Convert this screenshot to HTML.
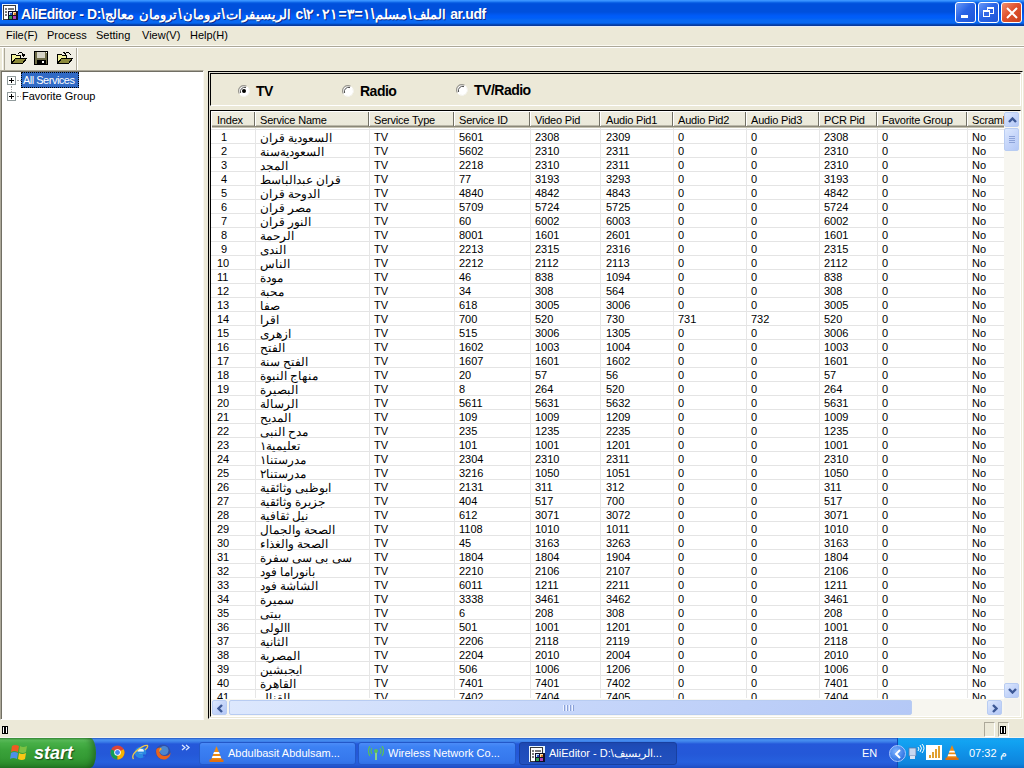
<!DOCTYPE html><html><head><meta charset="utf-8"><title>AliEditor</title><style>
*{box-sizing:border-box}
html,body{margin:0;padding:0}
body{width:1024px;height:768px;overflow:hidden;position:relative;background:#ECE9D8;font-family:"Liberation Sans",sans-serif;font-size:11px;color:#000}
.a{position:absolute}
.t{position:absolute;white-space:nowrap;line-height:13px}
#title{left:0;top:0;width:1024px;height:26px;background:linear-gradient(to bottom,#3E98FF 0px,#3590FF 1px,#1670EE 2px,#0458E0 3px,#0050DC 4px,#0050DC 12px,#0056EC 14px,#005CF8 16px,#005EF8 18px,#0868F2 20px,#0868F2 23px,#0052D0 24px,#083A9C 25px,#083A9C 26px)}
#title .tt{left:21px;top:6px;font-weight:bold;font-size:14px;letter-spacing:-0.4px;color:#fff;line-height:16px;text-shadow:1px 1px 0 #0A2A8A}
.tb{position:absolute;top:2px;width:21px;height:21px;border:1px solid #fff;border-radius:3px;background:linear-gradient(135deg,#6A9AF8 0%,#2A64E6 45%,#1E55D8 100%)}
.tb.cl{background:linear-gradient(135deg,#F19070 0%,#E0522E 45%,#C8401C 100%)}
#menu .t{top:29px}
.hsep1{left:0;top:46px;width:1024px;height:1px;background:#ACA899}
.hsep2{left:0;top:47px;width:1024px;height:1px;background:#FFFFFF}
#tree{left:0;top:70px;width:204px;height:650px;background:#fff;border-top:1px solid #ACA899;border-left:1px solid #ACA899;border-right:1px solid #F8F7F2;border-bottom:1px solid #fff;box-shadow:inset 1px 1px 0 #716F64}
#panel{left:208px;top:71px;width:815px;height:648px;border-top:1px solid #000;border-left:1px solid #000;border-right:1px solid #fff;border-bottom:1px solid #fff;background:#ECE9D8}
#panel2{left:209px;top:72px;width:813px;height:646px;border-top:1px solid #E0DED4;border-left:1px solid #E0DED4}
#rg{left:210px;top:73px;width:811px;height:33px;border-top:1px solid #000;border-left:1px solid #000;border-right:1px solid #fff;border-bottom:1px solid #fff}
#lv{left:210px;top:110px;width:811px;height:607px;background:#fff;border-top:1px solid #000;border-left:1px solid #000;border-right:1px solid #fff;border-bottom:1px solid #fff}
.hdr{left:211px;top:111px;width:793px;height:17px;border-top:1px solid #fff;border-left:1px solid #fff;background:linear-gradient(to bottom,#EDEBDE 0,#EBE9DA 13px,#8A8778 14px,#8A8778 15px,#C5C2B2 15px,#C5C2B2 16px)}
.c.hd{letter-spacing:-0.2px}
.hs{position:absolute;top:112px;width:1px;height:14px;background:#716F64}
.hs2{position:absolute;top:111px;width:1px;height:15px;background:#fff}
.gh{position:absolute;left:211px;width:793px;height:1px;background:#E4E4E4}
.gv{position:absolute;top:128px;width:1px;height:570px;background:#E6E6E6}
.c{position:absolute;white-space:nowrap;line-height:13px}
.c.ar{font-size:11.5px;margin-top:1px}
.rb{position:absolute;width:12px;height:12px;border-radius:50%;background:radial-gradient(circle at 60% 60%,#fff 0,#fff 40%,#E8E6DC 75%,#C8C4B4 100%);border:1px solid #D0CDC0}
.rl{position:absolute;font-weight:bold;font-size:14px;letter-spacing:-0.5px;line-height:16px;white-space:nowrap}
#vs{left:1004px;top:111px;width:16px;height:588px;background:#F7F6F0}
#hs{left:211px;top:699px;width:793px;height:17px;background:#F7F6F0}
.sbb{position:absolute;border:1px solid #B8CCF2;border-radius:2px;background:linear-gradient(135deg,#DDE8FD 0%,#C6D6FA 50%,#B4C8F6 100%)}
#status{left:0;top:718px;width:1024px;height:20px;background:#ECE9D8}
#task{left:0;top:738px;width:1024px;height:30px;background:linear-gradient(to bottom,#2050B8 0,#3C7EE6 1px,#4890F0 2px,#3A7CE8 4px,#2558DA 6px,#2458D8 16px,#2660DE 24px,#2458D4 27px,#1E4CC0 30px)}
#start{left:0;top:738px;width:96px;height:30px;border-radius:0 6px 6px 0/0 15px 15px 0;background:linear-gradient(to bottom,#3A8E3A 0,#5CBF5C 2px,#48B048 5px,#3AA23A 12px,#349A34 20px,#2C8C2C 26px,#237823 30px);box-shadow:inset -5px 0 6px -2px rgba(20,70,20,0.55)}
.task{position:absolute;top:742px;height:23px;border-radius:3px;background:linear-gradient(to bottom,#4C8CF8 0,#3C81F3 4px,#3577EC 18px,#2E6BE0 23px);border:1px solid #2358C8}
.task.act{background:linear-gradient(to bottom,#1E48B0 0,#1E4CB8 4px,#2150BE 18px,#2454C2 23px);border-color:#1840A0}
.task .t{color:#fff;top:4px}
#tray{left:897px;top:738px;width:127px;height:30px;background:linear-gradient(to bottom,#1C9CEE 0,#12A4F2 3px,#0F92E8 15px,#0E84DC 26px,#0B6CC8 30px);border-left:1px solid #0F4AB4}
</style></head><body>
<div id="title" class="a">
<svg class="a" style="left:2px;top:4px" width="16" height="16" viewBox="0 0 16 16" shape-rendering="crispEdges"><rect x="0" y="0" width="16" height="16" fill="#EAF6FF"/><rect x="1.5" y="1.5" width="12" height="14" fill="#fff" stroke="#3A3A3A"/><rect x="3" y="4" width="2" height="2" fill="#7A7A7A"/><rect x="3" y="7" width="2" height="2" fill="#7A7A7A"/><rect x="3" y="10" width="2" height="2" fill="#7A7A7A"/><rect x="6" y="4" width="6" height="2" fill="#7A7A7A"/><rect x="6" y="7" width="10" height="9" fill="#10102A"/><rect x="7" y="8" width="3" height="3" fill="#2A58C8"/><rect x="7" y="8" width="3" height="1" fill="#CDE6FF"/><rect x="7" y="8" width="1" height="3" fill="#CDE6FF"/><rect x="11" y="8" width="3" height="3" fill="#D87A20"/><rect x="11" y="8" width="3" height="1" fill="#FFDDA8"/><rect x="11" y="8" width="1" height="3" fill="#FFDDA8"/><rect x="7" y="12" width="3" height="3" fill="#30A050"/><rect x="11" y="12" width="3" height="3" fill="#B040B8"/></svg>
<div class="t tt">AliEditor - D:\<span dir="rtl" style="unicode-bidi:isolate;font-size:13.4px;letter-spacing:0;margin:0 0.7px">معالج</span> <span dir="rtl" style="unicode-bidi:isolate;font-size:13.4px;letter-spacing:0;margin:0 0.7px">ترومان</span>\<span dir="rtl" style="unicode-bidi:isolate;font-size:13.4px;letter-spacing:0;margin:0 0.7px">ترومان</span>\<span dir="rtl" style="unicode-bidi:isolate;font-size:13.4px;letter-spacing:0;margin:0 0.7px">الريسيفرات</span> <span style="unicode-bidi:bidi-override;direction:ltr">c\٢٠٢١=٣=١\</span><span dir="rtl" style="unicode-bidi:isolate;font-size:13.4px;letter-spacing:0;margin:0 0.7px">مسلم</span>\<span dir="rtl" style="unicode-bidi:isolate;font-size:13.4px;letter-spacing:0;margin:0 0.7px">الملف</span> ar.udf</div>
<div class="tb" style="left:955px"><div class="a" style="left:5px;top:12px;width:7px;height:3px;background:#fff"></div></div>
<div class="tb" style="left:978px"><div class="a" style="left:8px;top:4px;width:7px;height:7px;border:1px solid #fff;border-top-width:2px"></div><div class="a" style="left:4px;top:7px;width:7px;height:7px;border:1px solid #fff;border-top-width:2px;background:#3468E6"></div></div>
<div class="tb cl" style="left:1001px"><svg class="a" style="left:4px;top:4px" width="12" height="12" viewBox="0 0 12 12"><path d="M1 1L11 11M11 1L1 11" stroke="#fff" stroke-width="2"/></svg></div>
</div>
<div class="a" style="left:0;top:26px;width:1024px;height:1px;background:#E4ECF8"></div>
<div id="menu">
<div class="t" style="left:6px">File(F)</div>
<div class="t" style="left:47px">Process</div>
<div class="t" style="left:96px">Setting</div>
<div class="t" style="left:142px">View(V)</div>
<div class="t" style="left:190px">Help(H)</div>
</div>
<div class="a" style="left:0;top:45px;width:1024px;height:1px;background:#FBFAF2"></div><div class="a hsep1"></div><div class="a hsep2"></div>
<div class="a" style="left:2px;top:48px;width:1px;height:22px;background:#fff"></div>
<div class="a" style="left:4px;top:48px;width:1px;height:22px;background:#ACA899"></div>
<div class="a" style="left:5px;top:48px;width:71px;height:22px;background:#F0EEE4"></div>
<div class="a" style="left:76px;top:48px;width:1px;height:22px;background:#ACA899"></div>
<div class="a" style="left:77px;top:48px;width:1px;height:22px;background:#fff"></div>
<svg class="a" style="left:11px;top:51px" width="16" height="14" viewBox="0 0 16 14" shape-rendering="crispEdges"><path d="M0.5 12.5V3.5h4l1 1h4v3" fill="#F2F29A" stroke="#000"/><path d="M0.5 12.5V5" stroke="#000"/><path d="M0.5 12.5L4.5 7.5H15.5L11.5 12.5Z" fill="#8C8A3C" stroke="#000"/><path d="M8 1h3M7 2h1M11 2h1M12 3h1" stroke="#000"/><path d="M11 3h3v2h-1v1h-1z" fill="#000"/></svg>
<svg class="a" style="left:34px;top:51px" width="14" height="14" viewBox="0 0 14 14" shape-rendering="crispEdges"><rect x="0.5" y="0.5" width="13" height="13" fill="#6E6C48" stroke="#000"/><rect x="3" y="1" width="8" height="6" fill="#D6D4C8"/><rect x="3" y="9" width="9" height="4" fill="#000"/><rect x="8" y="10" width="2" height="2" fill="#fff"/><rect x="12" y="1" width="1" height="1" fill="#fff"/></svg>
<svg class="a" style="left:57px;top:51px" width="16" height="14" viewBox="0 0 16 14" shape-rendering="crispEdges"><path d="M0.5 12.5V3.5h4l1 1h4v3" fill="#F2F29A" stroke="#000"/><path d="M0.5 12.5V5" stroke="#000"/><path d="M0.5 12.5L4.5 7.5H15.5L11.5 12.5Z" fill="#8C8A3C" stroke="#000"/><path d="M9 1h3M8 2h1M12 2h1M13 3h1" stroke="#000"/><path d="M6 1h2v1h1v2h-1v-1h-1v-1h-1z" fill="#000"/></svg>
<div id="tree" class="a"></div>
<div class="a" style="left:21px;top:72px;width:58px;height:16px;background:#316AC5;outline:1px dotted #000;outline-offset:-1px"></div>
<div class="t" style="left:23px;top:74px;color:#fff;letter-spacing:-0.5px">All Services</div>
<div class="t" style="left:22px;top:90px">Favorite Group</div>
<div class="a" style="left:7px;top:76px;width:9px;height:9px;border:1px solid #919B9C;background:#fff"><div class="a" style="left:1px;top:3px;width:5px;height:1px;background:#000"></div><div class="a" style="left:3px;top:1px;width:1px;height:5px;background:#000"></div></div>
<div class="a" style="left:17px;top:80px;width:4px;height:1px;border-top:1px dotted #A0A0A0"></div>
<div class="a" style="left:7px;top:92px;width:9px;height:9px;border:1px solid #919B9C;background:#fff"><div class="a" style="left:1px;top:3px;width:5px;height:1px;background:#000"></div><div class="a" style="left:3px;top:1px;width:1px;height:5px;background:#000"></div></div>
<div class="a" style="left:17px;top:96px;width:4px;height:1px;border-top:1px dotted #A0A0A0"></div>
<div class="a" style="left:11px;top:86px;width:1px;height:6px;border-left:1px dotted #A0A0A0"></div>
<div id="panel" class="a"></div><div id="panel2" class="a"></div><div id="rg" class="a"></div>
<svg class="a" style="left:238px;top:85px" width="12" height="12" viewBox="0 0 12 12"><circle cx="6" cy="6" r="5.5" fill="#fff"/><path d="M1.3 8.5A5.3 5.3 0 0 1 8.5 1.3" fill="none" stroke="#9A9890" stroke-width="1.2"/><path d="M2.6 8A4.2 4.2 0 0 1 8 2.6" fill="none" stroke="#505050" stroke-width="1"/><path d="M3.5 10.7A5.3 5.3 0 0 0 10.7 3.5" fill="none" stroke="#F4F3EE" stroke-width="1"/><circle cx="6" cy="6" r="2" fill="#000"/></svg>
<div class="rl" style="left:256px;top:83px">TV</div>
<svg class="a" style="left:342px;top:85px" width="12" height="12" viewBox="0 0 12 12"><circle cx="6" cy="6" r="5.5" fill="#fff"/><path d="M1.3 8.5A5.3 5.3 0 0 1 8.5 1.3" fill="none" stroke="#9A9890" stroke-width="1.2"/><path d="M2.6 8A4.2 4.2 0 0 1 8 2.6" fill="none" stroke="#505050" stroke-width="1"/><path d="M3.5 10.7A5.3 5.3 0 0 0 10.7 3.5" fill="none" stroke="#F4F3EE" stroke-width="1"/></svg>
<div class="rl" style="left:360px;top:83px">Radio</div>
<svg class="a" style="left:456px;top:84px" width="12" height="12" viewBox="0 0 12 12"><circle cx="6" cy="6" r="5.5" fill="#fff"/><path d="M1.3 8.5A5.3 5.3 0 0 1 8.5 1.3" fill="none" stroke="#9A9890" stroke-width="1.2"/><path d="M2.6 8A4.2 4.2 0 0 1 8 2.6" fill="none" stroke="#505050" stroke-width="1"/><path d="M3.5 10.7A5.3 5.3 0 0 0 10.7 3.5" fill="none" stroke="#F4F3EE" stroke-width="1"/></svg>
<div class="rl" style="left:474px;top:82px">TV/Radio</div>
<div id="lv" class="a"></div>
<div class="a hdr"></div>
<div class="hs" style="left:254px"></div><div class="hs2" style="left:255px"></div>
<div class="hs" style="left:368px"></div><div class="hs2" style="left:369px"></div>
<div class="hs" style="left:453px"></div><div class="hs2" style="left:454px"></div>
<div class="hs" style="left:529px"></div><div class="hs2" style="left:530px"></div>
<div class="hs" style="left:599px"></div><div class="hs2" style="left:600px"></div>
<div class="hs" style="left:672px"></div><div class="hs2" style="left:673px"></div>
<div class="hs" style="left:745px"></div><div class="hs2" style="left:746px"></div>
<div class="hs" style="left:818px"></div><div class="hs2" style="left:819px"></div>
<div class="hs" style="left:876px"></div><div class="hs2" style="left:877px"></div>
<div class="hs" style="left:966px"></div><div class="hs2" style="left:967px"></div>
<div class="c hd" style="left:217px;top:114px">Index</div>
<div class="c hd" style="left:260px;top:114px">Service Name</div>
<div class="c hd" style="left:374px;top:114px">Service Type</div>
<div class="c hd" style="left:459px;top:114px">Service ID</div>
<div class="c hd" style="left:535px;top:114px">Video Pid</div>
<div class="c hd" style="left:606px;top:114px">Audio Pid1</div>
<div class="c hd" style="left:678px;top:114px">Audio Pid2</div>
<div class="c hd" style="left:751px;top:114px">Audio Pid3</div>
<div class="c hd" style="left:824px;top:114px">PCR Pid</div>
<div class="c hd" style="left:882px;top:114px">Favorite Group</div>
<div class="c hd" style="left:972px;top:114px">Scrambl</div>
<div class="gh" style="top:129px"></div>
<div class="gh" style="top:143px"></div>
<div class="gh" style="top:157px"></div>
<div class="gh" style="top:171px"></div>
<div class="gh" style="top:185px"></div>
<div class="gh" style="top:199px"></div>
<div class="gh" style="top:213px"></div>
<div class="gh" style="top:227px"></div>
<div class="gh" style="top:241px"></div>
<div class="gh" style="top:255px"></div>
<div class="gh" style="top:269px"></div>
<div class="gh" style="top:283px"></div>
<div class="gh" style="top:297px"></div>
<div class="gh" style="top:311px"></div>
<div class="gh" style="top:325px"></div>
<div class="gh" style="top:339px"></div>
<div class="gh" style="top:353px"></div>
<div class="gh" style="top:367px"></div>
<div class="gh" style="top:381px"></div>
<div class="gh" style="top:395px"></div>
<div class="gh" style="top:409px"></div>
<div class="gh" style="top:423px"></div>
<div class="gh" style="top:437px"></div>
<div class="gh" style="top:451px"></div>
<div class="gh" style="top:465px"></div>
<div class="gh" style="top:479px"></div>
<div class="gh" style="top:493px"></div>
<div class="gh" style="top:507px"></div>
<div class="gh" style="top:521px"></div>
<div class="gh" style="top:535px"></div>
<div class="gh" style="top:549px"></div>
<div class="gh" style="top:563px"></div>
<div class="gh" style="top:577px"></div>
<div class="gh" style="top:591px"></div>
<div class="gh" style="top:605px"></div>
<div class="gh" style="top:619px"></div>
<div class="gh" style="top:633px"></div>
<div class="gh" style="top:647px"></div>
<div class="gh" style="top:661px"></div>
<div class="gh" style="top:675px"></div>
<div class="gh" style="top:689px"></div>
<div class="gv" style="left:255px"></div>
<div class="gv" style="left:369px"></div>
<div class="gv" style="left:454px"></div>
<div class="gv" style="left:530px"></div>
<div class="gv" style="left:600px"></div>
<div class="gv" style="left:673px"></div>
<div class="gv" style="left:746px"></div>
<div class="gv" style="left:819px"></div>
<div class="gv" style="left:877px"></div>
<div class="gv" style="left:967px"></div>
<div class="c" style="left:221px;top:131px">1</div>
<div class="c ar" style="left:260px;top:131px" dir="rtl">السعودية قران</div>
<div class="c" style="left:374px;top:131px">TV</div>
<div class="c" style="left:459px;top:131px">5601</div>
<div class="c" style="left:535px;top:131px">2308</div>
<div class="c" style="left:606px;top:131px">2309</div>
<div class="c" style="left:678px;top:131px">0</div>
<div class="c" style="left:751px;top:131px">0</div>
<div class="c" style="left:824px;top:131px">2308</div>
<div class="c" style="left:882px;top:131px">0</div>
<div class="c" style="left:972px;top:131px">No</div>
<div class="c" style="left:221px;top:145px">2</div>
<div class="c ar" style="left:260px;top:145px" dir="rtl">السعوديةسنة</div>
<div class="c" style="left:374px;top:145px">TV</div>
<div class="c" style="left:459px;top:145px">5602</div>
<div class="c" style="left:535px;top:145px">2310</div>
<div class="c" style="left:606px;top:145px">2311</div>
<div class="c" style="left:678px;top:145px">0</div>
<div class="c" style="left:751px;top:145px">0</div>
<div class="c" style="left:824px;top:145px">2310</div>
<div class="c" style="left:882px;top:145px">0</div>
<div class="c" style="left:972px;top:145px">No</div>
<div class="c" style="left:221px;top:159px">3</div>
<div class="c ar" style="left:260px;top:159px" dir="rtl">المجد</div>
<div class="c" style="left:374px;top:159px">TV</div>
<div class="c" style="left:459px;top:159px">2218</div>
<div class="c" style="left:535px;top:159px">2310</div>
<div class="c" style="left:606px;top:159px">2311</div>
<div class="c" style="left:678px;top:159px">0</div>
<div class="c" style="left:751px;top:159px">0</div>
<div class="c" style="left:824px;top:159px">2310</div>
<div class="c" style="left:882px;top:159px">0</div>
<div class="c" style="left:972px;top:159px">No</div>
<div class="c" style="left:221px;top:173px">4</div>
<div class="c ar" style="left:260px;top:173px" dir="rtl">قران عبدالباسط</div>
<div class="c" style="left:374px;top:173px">TV</div>
<div class="c" style="left:459px;top:173px">77</div>
<div class="c" style="left:535px;top:173px">3193</div>
<div class="c" style="left:606px;top:173px">3293</div>
<div class="c" style="left:678px;top:173px">0</div>
<div class="c" style="left:751px;top:173px">0</div>
<div class="c" style="left:824px;top:173px">3193</div>
<div class="c" style="left:882px;top:173px">0</div>
<div class="c" style="left:972px;top:173px">No</div>
<div class="c" style="left:221px;top:187px">5</div>
<div class="c ar" style="left:260px;top:187px" dir="rtl">الدوحة قران</div>
<div class="c" style="left:374px;top:187px">TV</div>
<div class="c" style="left:459px;top:187px">4840</div>
<div class="c" style="left:535px;top:187px">4842</div>
<div class="c" style="left:606px;top:187px">4843</div>
<div class="c" style="left:678px;top:187px">0</div>
<div class="c" style="left:751px;top:187px">0</div>
<div class="c" style="left:824px;top:187px">4842</div>
<div class="c" style="left:882px;top:187px">0</div>
<div class="c" style="left:972px;top:187px">No</div>
<div class="c" style="left:221px;top:201px">6</div>
<div class="c ar" style="left:260px;top:201px" dir="rtl">مصر قران</div>
<div class="c" style="left:374px;top:201px">TV</div>
<div class="c" style="left:459px;top:201px">5709</div>
<div class="c" style="left:535px;top:201px">5724</div>
<div class="c" style="left:606px;top:201px">5725</div>
<div class="c" style="left:678px;top:201px">0</div>
<div class="c" style="left:751px;top:201px">0</div>
<div class="c" style="left:824px;top:201px">5724</div>
<div class="c" style="left:882px;top:201px">0</div>
<div class="c" style="left:972px;top:201px">No</div>
<div class="c" style="left:221px;top:215px">7</div>
<div class="c ar" style="left:260px;top:215px" dir="rtl">النور قران</div>
<div class="c" style="left:374px;top:215px">TV</div>
<div class="c" style="left:459px;top:215px">60</div>
<div class="c" style="left:535px;top:215px">6002</div>
<div class="c" style="left:606px;top:215px">6003</div>
<div class="c" style="left:678px;top:215px">0</div>
<div class="c" style="left:751px;top:215px">0</div>
<div class="c" style="left:824px;top:215px">6002</div>
<div class="c" style="left:882px;top:215px">0</div>
<div class="c" style="left:972px;top:215px">No</div>
<div class="c" style="left:221px;top:229px">8</div>
<div class="c ar" style="left:260px;top:229px" dir="rtl">الرحمة</div>
<div class="c" style="left:374px;top:229px">TV</div>
<div class="c" style="left:459px;top:229px">8001</div>
<div class="c" style="left:535px;top:229px">1601</div>
<div class="c" style="left:606px;top:229px">2601</div>
<div class="c" style="left:678px;top:229px">0</div>
<div class="c" style="left:751px;top:229px">0</div>
<div class="c" style="left:824px;top:229px">1601</div>
<div class="c" style="left:882px;top:229px">0</div>
<div class="c" style="left:972px;top:229px">No</div>
<div class="c" style="left:221px;top:243px">9</div>
<div class="c ar" style="left:260px;top:243px" dir="rtl">الندى</div>
<div class="c" style="left:374px;top:243px">TV</div>
<div class="c" style="left:459px;top:243px">2213</div>
<div class="c" style="left:535px;top:243px">2315</div>
<div class="c" style="left:606px;top:243px">2316</div>
<div class="c" style="left:678px;top:243px">0</div>
<div class="c" style="left:751px;top:243px">0</div>
<div class="c" style="left:824px;top:243px">2315</div>
<div class="c" style="left:882px;top:243px">0</div>
<div class="c" style="left:972px;top:243px">No</div>
<div class="c" style="left:217px;top:257px">10</div>
<div class="c ar" style="left:260px;top:257px" dir="rtl">الناس</div>
<div class="c" style="left:374px;top:257px">TV</div>
<div class="c" style="left:459px;top:257px">2212</div>
<div class="c" style="left:535px;top:257px">2112</div>
<div class="c" style="left:606px;top:257px">2113</div>
<div class="c" style="left:678px;top:257px">0</div>
<div class="c" style="left:751px;top:257px">0</div>
<div class="c" style="left:824px;top:257px">2112</div>
<div class="c" style="left:882px;top:257px">0</div>
<div class="c" style="left:972px;top:257px">No</div>
<div class="c" style="left:217px;top:271px">11</div>
<div class="c ar" style="left:260px;top:271px" dir="rtl">مودة</div>
<div class="c" style="left:374px;top:271px">TV</div>
<div class="c" style="left:459px;top:271px">46</div>
<div class="c" style="left:535px;top:271px">838</div>
<div class="c" style="left:606px;top:271px">1094</div>
<div class="c" style="left:678px;top:271px">0</div>
<div class="c" style="left:751px;top:271px">0</div>
<div class="c" style="left:824px;top:271px">838</div>
<div class="c" style="left:882px;top:271px">0</div>
<div class="c" style="left:972px;top:271px">No</div>
<div class="c" style="left:217px;top:285px">12</div>
<div class="c ar" style="left:260px;top:285px" dir="rtl">محبة</div>
<div class="c" style="left:374px;top:285px">TV</div>
<div class="c" style="left:459px;top:285px">34</div>
<div class="c" style="left:535px;top:285px">308</div>
<div class="c" style="left:606px;top:285px">564</div>
<div class="c" style="left:678px;top:285px">0</div>
<div class="c" style="left:751px;top:285px">0</div>
<div class="c" style="left:824px;top:285px">308</div>
<div class="c" style="left:882px;top:285px">0</div>
<div class="c" style="left:972px;top:285px">No</div>
<div class="c" style="left:217px;top:299px">13</div>
<div class="c ar" style="left:260px;top:299px" dir="rtl">صفا</div>
<div class="c" style="left:374px;top:299px">TV</div>
<div class="c" style="left:459px;top:299px">618</div>
<div class="c" style="left:535px;top:299px">3005</div>
<div class="c" style="left:606px;top:299px">3006</div>
<div class="c" style="left:678px;top:299px">0</div>
<div class="c" style="left:751px;top:299px">0</div>
<div class="c" style="left:824px;top:299px">3005</div>
<div class="c" style="left:882px;top:299px">0</div>
<div class="c" style="left:972px;top:299px">No</div>
<div class="c" style="left:217px;top:313px">14</div>
<div class="c ar" style="left:260px;top:313px" dir="rtl">اقرا</div>
<div class="c" style="left:374px;top:313px">TV</div>
<div class="c" style="left:459px;top:313px">700</div>
<div class="c" style="left:535px;top:313px">520</div>
<div class="c" style="left:606px;top:313px">730</div>
<div class="c" style="left:678px;top:313px">731</div>
<div class="c" style="left:751px;top:313px">732</div>
<div class="c" style="left:824px;top:313px">520</div>
<div class="c" style="left:882px;top:313px">0</div>
<div class="c" style="left:972px;top:313px">No</div>
<div class="c" style="left:217px;top:327px">15</div>
<div class="c ar" style="left:260px;top:327px" dir="rtl">ازهرى</div>
<div class="c" style="left:374px;top:327px">TV</div>
<div class="c" style="left:459px;top:327px">515</div>
<div class="c" style="left:535px;top:327px">3006</div>
<div class="c" style="left:606px;top:327px">1305</div>
<div class="c" style="left:678px;top:327px">0</div>
<div class="c" style="left:751px;top:327px">0</div>
<div class="c" style="left:824px;top:327px">3006</div>
<div class="c" style="left:882px;top:327px">0</div>
<div class="c" style="left:972px;top:327px">No</div>
<div class="c" style="left:217px;top:341px">16</div>
<div class="c ar" style="left:260px;top:341px" dir="rtl">الفتح</div>
<div class="c" style="left:374px;top:341px">TV</div>
<div class="c" style="left:459px;top:341px">1602</div>
<div class="c" style="left:535px;top:341px">1003</div>
<div class="c" style="left:606px;top:341px">1004</div>
<div class="c" style="left:678px;top:341px">0</div>
<div class="c" style="left:751px;top:341px">0</div>
<div class="c" style="left:824px;top:341px">1003</div>
<div class="c" style="left:882px;top:341px">0</div>
<div class="c" style="left:972px;top:341px">No</div>
<div class="c" style="left:217px;top:355px">17</div>
<div class="c ar" style="left:260px;top:355px" dir="rtl">الفتح سنة</div>
<div class="c" style="left:374px;top:355px">TV</div>
<div class="c" style="left:459px;top:355px">1607</div>
<div class="c" style="left:535px;top:355px">1601</div>
<div class="c" style="left:606px;top:355px">1602</div>
<div class="c" style="left:678px;top:355px">0</div>
<div class="c" style="left:751px;top:355px">0</div>
<div class="c" style="left:824px;top:355px">1601</div>
<div class="c" style="left:882px;top:355px">0</div>
<div class="c" style="left:972px;top:355px">No</div>
<div class="c" style="left:217px;top:369px">18</div>
<div class="c ar" style="left:260px;top:369px" dir="rtl">منهاج النبوة</div>
<div class="c" style="left:374px;top:369px">TV</div>
<div class="c" style="left:459px;top:369px">20</div>
<div class="c" style="left:535px;top:369px">57</div>
<div class="c" style="left:606px;top:369px">56</div>
<div class="c" style="left:678px;top:369px">0</div>
<div class="c" style="left:751px;top:369px">0</div>
<div class="c" style="left:824px;top:369px">57</div>
<div class="c" style="left:882px;top:369px">0</div>
<div class="c" style="left:972px;top:369px">No</div>
<div class="c" style="left:217px;top:383px">19</div>
<div class="c ar" style="left:260px;top:383px" dir="rtl">البصيرة</div>
<div class="c" style="left:374px;top:383px">TV</div>
<div class="c" style="left:459px;top:383px">8</div>
<div class="c" style="left:535px;top:383px">264</div>
<div class="c" style="left:606px;top:383px">520</div>
<div class="c" style="left:678px;top:383px">0</div>
<div class="c" style="left:751px;top:383px">0</div>
<div class="c" style="left:824px;top:383px">264</div>
<div class="c" style="left:882px;top:383px">0</div>
<div class="c" style="left:972px;top:383px">No</div>
<div class="c" style="left:217px;top:397px">20</div>
<div class="c ar" style="left:260px;top:397px" dir="rtl">الرسالة</div>
<div class="c" style="left:374px;top:397px">TV</div>
<div class="c" style="left:459px;top:397px">5611</div>
<div class="c" style="left:535px;top:397px">5631</div>
<div class="c" style="left:606px;top:397px">5632</div>
<div class="c" style="left:678px;top:397px">0</div>
<div class="c" style="left:751px;top:397px">0</div>
<div class="c" style="left:824px;top:397px">5631</div>
<div class="c" style="left:882px;top:397px">0</div>
<div class="c" style="left:972px;top:397px">No</div>
<div class="c" style="left:217px;top:411px">21</div>
<div class="c ar" style="left:260px;top:411px" dir="rtl">المديح</div>
<div class="c" style="left:374px;top:411px">TV</div>
<div class="c" style="left:459px;top:411px">109</div>
<div class="c" style="left:535px;top:411px">1009</div>
<div class="c" style="left:606px;top:411px">1209</div>
<div class="c" style="left:678px;top:411px">0</div>
<div class="c" style="left:751px;top:411px">0</div>
<div class="c" style="left:824px;top:411px">1009</div>
<div class="c" style="left:882px;top:411px">0</div>
<div class="c" style="left:972px;top:411px">No</div>
<div class="c" style="left:217px;top:425px">22</div>
<div class="c ar" style="left:260px;top:425px" dir="rtl">مدح النبى</div>
<div class="c" style="left:374px;top:425px">TV</div>
<div class="c" style="left:459px;top:425px">235</div>
<div class="c" style="left:535px;top:425px">1235</div>
<div class="c" style="left:606px;top:425px">2235</div>
<div class="c" style="left:678px;top:425px">0</div>
<div class="c" style="left:751px;top:425px">0</div>
<div class="c" style="left:824px;top:425px">1235</div>
<div class="c" style="left:882px;top:425px">0</div>
<div class="c" style="left:972px;top:425px">No</div>
<div class="c" style="left:217px;top:439px">23</div>
<div class="c ar" style="left:260px;top:439px" dir="rtl">تعليمية١</div>
<div class="c" style="left:374px;top:439px">TV</div>
<div class="c" style="left:459px;top:439px">101</div>
<div class="c" style="left:535px;top:439px">1001</div>
<div class="c" style="left:606px;top:439px">1201</div>
<div class="c" style="left:678px;top:439px">0</div>
<div class="c" style="left:751px;top:439px">0</div>
<div class="c" style="left:824px;top:439px">1001</div>
<div class="c" style="left:882px;top:439px">0</div>
<div class="c" style="left:972px;top:439px">No</div>
<div class="c" style="left:217px;top:453px">24</div>
<div class="c ar" style="left:260px;top:453px" dir="rtl">مدرستنا١</div>
<div class="c" style="left:374px;top:453px">TV</div>
<div class="c" style="left:459px;top:453px">2304</div>
<div class="c" style="left:535px;top:453px">2310</div>
<div class="c" style="left:606px;top:453px">2311</div>
<div class="c" style="left:678px;top:453px">0</div>
<div class="c" style="left:751px;top:453px">0</div>
<div class="c" style="left:824px;top:453px">2310</div>
<div class="c" style="left:882px;top:453px">0</div>
<div class="c" style="left:972px;top:453px">No</div>
<div class="c" style="left:217px;top:467px">25</div>
<div class="c ar" style="left:260px;top:467px" dir="rtl">مدرستنا٢</div>
<div class="c" style="left:374px;top:467px">TV</div>
<div class="c" style="left:459px;top:467px">3216</div>
<div class="c" style="left:535px;top:467px">1050</div>
<div class="c" style="left:606px;top:467px">1051</div>
<div class="c" style="left:678px;top:467px">0</div>
<div class="c" style="left:751px;top:467px">0</div>
<div class="c" style="left:824px;top:467px">1050</div>
<div class="c" style="left:882px;top:467px">0</div>
<div class="c" style="left:972px;top:467px">No</div>
<div class="c" style="left:217px;top:481px">26</div>
<div class="c ar" style="left:260px;top:481px" dir="rtl">ابوظبى وثائقية</div>
<div class="c" style="left:374px;top:481px">TV</div>
<div class="c" style="left:459px;top:481px">2131</div>
<div class="c" style="left:535px;top:481px">311</div>
<div class="c" style="left:606px;top:481px">312</div>
<div class="c" style="left:678px;top:481px">0</div>
<div class="c" style="left:751px;top:481px">0</div>
<div class="c" style="left:824px;top:481px">311</div>
<div class="c" style="left:882px;top:481px">0</div>
<div class="c" style="left:972px;top:481px">No</div>
<div class="c" style="left:217px;top:495px">27</div>
<div class="c ar" style="left:260px;top:495px" dir="rtl">جزيرة وثائقية</div>
<div class="c" style="left:374px;top:495px">TV</div>
<div class="c" style="left:459px;top:495px">404</div>
<div class="c" style="left:535px;top:495px">517</div>
<div class="c" style="left:606px;top:495px">700</div>
<div class="c" style="left:678px;top:495px">0</div>
<div class="c" style="left:751px;top:495px">0</div>
<div class="c" style="left:824px;top:495px">517</div>
<div class="c" style="left:882px;top:495px">0</div>
<div class="c" style="left:972px;top:495px">No</div>
<div class="c" style="left:217px;top:509px">28</div>
<div class="c ar" style="left:260px;top:509px" dir="rtl">نيل ثقافية</div>
<div class="c" style="left:374px;top:509px">TV</div>
<div class="c" style="left:459px;top:509px">612</div>
<div class="c" style="left:535px;top:509px">3071</div>
<div class="c" style="left:606px;top:509px">3072</div>
<div class="c" style="left:678px;top:509px">0</div>
<div class="c" style="left:751px;top:509px">0</div>
<div class="c" style="left:824px;top:509px">3071</div>
<div class="c" style="left:882px;top:509px">0</div>
<div class="c" style="left:972px;top:509px">No</div>
<div class="c" style="left:217px;top:523px">29</div>
<div class="c ar" style="left:260px;top:523px" dir="rtl">الصحة والجمال</div>
<div class="c" style="left:374px;top:523px">TV</div>
<div class="c" style="left:459px;top:523px">1108</div>
<div class="c" style="left:535px;top:523px">1010</div>
<div class="c" style="left:606px;top:523px">1011</div>
<div class="c" style="left:678px;top:523px">0</div>
<div class="c" style="left:751px;top:523px">0</div>
<div class="c" style="left:824px;top:523px">1010</div>
<div class="c" style="left:882px;top:523px">0</div>
<div class="c" style="left:972px;top:523px">No</div>
<div class="c" style="left:217px;top:537px">30</div>
<div class="c ar" style="left:260px;top:537px" dir="rtl">الصحة والغذاء</div>
<div class="c" style="left:374px;top:537px">TV</div>
<div class="c" style="left:459px;top:537px">45</div>
<div class="c" style="left:535px;top:537px">3163</div>
<div class="c" style="left:606px;top:537px">3263</div>
<div class="c" style="left:678px;top:537px">0</div>
<div class="c" style="left:751px;top:537px">0</div>
<div class="c" style="left:824px;top:537px">3163</div>
<div class="c" style="left:882px;top:537px">0</div>
<div class="c" style="left:972px;top:537px">No</div>
<div class="c" style="left:217px;top:551px">31</div>
<div class="c ar" style="left:260px;top:551px" dir="rtl">سى بى سى سفرة</div>
<div class="c" style="left:374px;top:551px">TV</div>
<div class="c" style="left:459px;top:551px">1804</div>
<div class="c" style="left:535px;top:551px">1804</div>
<div class="c" style="left:606px;top:551px">1904</div>
<div class="c" style="left:678px;top:551px">0</div>
<div class="c" style="left:751px;top:551px">0</div>
<div class="c" style="left:824px;top:551px">1804</div>
<div class="c" style="left:882px;top:551px">0</div>
<div class="c" style="left:972px;top:551px">No</div>
<div class="c" style="left:217px;top:565px">32</div>
<div class="c ar" style="left:260px;top:565px" dir="rtl">بانوراما فود</div>
<div class="c" style="left:374px;top:565px">TV</div>
<div class="c" style="left:459px;top:565px">2210</div>
<div class="c" style="left:535px;top:565px">2106</div>
<div class="c" style="left:606px;top:565px">2107</div>
<div class="c" style="left:678px;top:565px">0</div>
<div class="c" style="left:751px;top:565px">0</div>
<div class="c" style="left:824px;top:565px">2106</div>
<div class="c" style="left:882px;top:565px">0</div>
<div class="c" style="left:972px;top:565px">No</div>
<div class="c" style="left:217px;top:579px">33</div>
<div class="c ar" style="left:260px;top:579px" dir="rtl">الشاشة فود</div>
<div class="c" style="left:374px;top:579px">TV</div>
<div class="c" style="left:459px;top:579px">6011</div>
<div class="c" style="left:535px;top:579px">1211</div>
<div class="c" style="left:606px;top:579px">2211</div>
<div class="c" style="left:678px;top:579px">0</div>
<div class="c" style="left:751px;top:579px">0</div>
<div class="c" style="left:824px;top:579px">1211</div>
<div class="c" style="left:882px;top:579px">0</div>
<div class="c" style="left:972px;top:579px">No</div>
<div class="c" style="left:217px;top:593px">34</div>
<div class="c ar" style="left:260px;top:593px" dir="rtl">سميرة</div>
<div class="c" style="left:374px;top:593px">TV</div>
<div class="c" style="left:459px;top:593px">3338</div>
<div class="c" style="left:535px;top:593px">3461</div>
<div class="c" style="left:606px;top:593px">3462</div>
<div class="c" style="left:678px;top:593px">0</div>
<div class="c" style="left:751px;top:593px">0</div>
<div class="c" style="left:824px;top:593px">3461</div>
<div class="c" style="left:882px;top:593px">0</div>
<div class="c" style="left:972px;top:593px">No</div>
<div class="c" style="left:217px;top:607px">35</div>
<div class="c ar" style="left:260px;top:607px" dir="rtl">بيتى</div>
<div class="c" style="left:374px;top:607px">TV</div>
<div class="c" style="left:459px;top:607px">6</div>
<div class="c" style="left:535px;top:607px">208</div>
<div class="c" style="left:606px;top:607px">308</div>
<div class="c" style="left:678px;top:607px">0</div>
<div class="c" style="left:751px;top:607px">0</div>
<div class="c" style="left:824px;top:607px">208</div>
<div class="c" style="left:882px;top:607px">0</div>
<div class="c" style="left:972px;top:607px">No</div>
<div class="c" style="left:217px;top:621px">36</div>
<div class="c ar" style="left:260px;top:621px" dir="rtl">االولى</div>
<div class="c" style="left:374px;top:621px">TV</div>
<div class="c" style="left:459px;top:621px">501</div>
<div class="c" style="left:535px;top:621px">1001</div>
<div class="c" style="left:606px;top:621px">1201</div>
<div class="c" style="left:678px;top:621px">0</div>
<div class="c" style="left:751px;top:621px">0</div>
<div class="c" style="left:824px;top:621px">1001</div>
<div class="c" style="left:882px;top:621px">0</div>
<div class="c" style="left:972px;top:621px">No</div>
<div class="c" style="left:217px;top:635px">37</div>
<div class="c ar" style="left:260px;top:635px" dir="rtl">الثانية</div>
<div class="c" style="left:374px;top:635px">TV</div>
<div class="c" style="left:459px;top:635px">2206</div>
<div class="c" style="left:535px;top:635px">2118</div>
<div class="c" style="left:606px;top:635px">2119</div>
<div class="c" style="left:678px;top:635px">0</div>
<div class="c" style="left:751px;top:635px">0</div>
<div class="c" style="left:824px;top:635px">2118</div>
<div class="c" style="left:882px;top:635px">0</div>
<div class="c" style="left:972px;top:635px">No</div>
<div class="c" style="left:217px;top:649px">38</div>
<div class="c ar" style="left:260px;top:649px" dir="rtl">المصرية</div>
<div class="c" style="left:374px;top:649px">TV</div>
<div class="c" style="left:459px;top:649px">2204</div>
<div class="c" style="left:535px;top:649px">2010</div>
<div class="c" style="left:606px;top:649px">2004</div>
<div class="c" style="left:678px;top:649px">0</div>
<div class="c" style="left:751px;top:649px">0</div>
<div class="c" style="left:824px;top:649px">2010</div>
<div class="c" style="left:882px;top:649px">0</div>
<div class="c" style="left:972px;top:649px">No</div>
<div class="c" style="left:217px;top:663px">39</div>
<div class="c ar" style="left:260px;top:663px" dir="rtl">ايجبشين</div>
<div class="c" style="left:374px;top:663px">TV</div>
<div class="c" style="left:459px;top:663px">506</div>
<div class="c" style="left:535px;top:663px">1006</div>
<div class="c" style="left:606px;top:663px">1206</div>
<div class="c" style="left:678px;top:663px">0</div>
<div class="c" style="left:751px;top:663px">0</div>
<div class="c" style="left:824px;top:663px">1006</div>
<div class="c" style="left:882px;top:663px">0</div>
<div class="c" style="left:972px;top:663px">No</div>
<div class="c" style="left:217px;top:677px">40</div>
<div class="c ar" style="left:260px;top:677px" dir="rtl">القاهرة</div>
<div class="c" style="left:374px;top:677px">TV</div>
<div class="c" style="left:459px;top:677px">7401</div>
<div class="c" style="left:535px;top:677px">7401</div>
<div class="c" style="left:606px;top:677px">7402</div>
<div class="c" style="left:678px;top:677px">0</div>
<div class="c" style="left:751px;top:677px">0</div>
<div class="c" style="left:824px;top:677px">7401</div>
<div class="c" style="left:882px;top:677px">0</div>
<div class="c" style="left:972px;top:677px">No</div>
<div class="c" style="left:217px;top:691px">41</div>
<div class="c ar" style="left:260px;top:691px" dir="rtl">القنال</div>
<div class="c" style="left:374px;top:691px">TV</div>
<div class="c" style="left:459px;top:691px">7402</div>
<div class="c" style="left:535px;top:691px">7404</div>
<div class="c" style="left:606px;top:691px">7405</div>
<div class="c" style="left:678px;top:691px">0</div>
<div class="c" style="left:751px;top:691px">0</div>
<div class="c" style="left:824px;top:691px">7404</div>
<div class="c" style="left:882px;top:691px">0</div>
<div class="c" style="left:972px;top:691px">No</div>
<div id="hs" class="a"></div>
<div id="vs" class="a"></div>
<div class="sbb" style="left:1004px;top:112px;width:15px;height:15px"><svg class="a" style="left:3px;top:4px" width="9" height="6" viewBox="0 0 9 6"><path d="M1 5L4.5 1.5L8 5" fill="none" stroke="#3C5896" stroke-width="2.4"/></svg></div>
<div class="sbb" style="left:1004px;top:128px;width:15px;height:23px"><div class="a" style="left:4px;top:7px;width:6px;height:1px;background:#8CA2D8;box-shadow:0 2px 0 #8CA2D8,0 4px 0 #8CA2D8,0 6px 0 #8CA2D8"></div></div>
<div class="sbb" style="left:1004px;top:683px;width:15px;height:15px"><svg class="a" style="left:3px;top:4px" width="9" height="6" viewBox="0 0 9 6"><path d="M1 1L4.5 4.5L8 1" fill="none" stroke="#3C5896" stroke-width="2.4"/></svg></div>
<div class="sbb" style="left:212px;top:700px;width:15px;height:15px"><svg class="a" style="left:4px;top:3px" width="6" height="9" viewBox="0 0 6 9"><path d="M5 1L1.5 4.5L5 8" fill="none" stroke="#3C5896" stroke-width="2.4"/></svg></div>
<div class="sbb" style="left:229px;top:700px;width:683px;height:15px"><div class="a" style="left:333px;top:4px;width:1px;height:6px;background:#EEF3FF;box-shadow:1px 0 0 #8CA2D8,3px 0 0 #EEF3FF,4px 0 0 #8CA2D8,6px 0 0 #EEF3FF,7px 0 0 #8CA2D8,9px 0 0 #EEF3FF,10px 0 0 #8CA2D8"></div></div>
<div class="sbb" style="left:987px;top:700px;width:15px;height:15px"><svg class="a" style="left:4px;top:3px" width="6" height="9" viewBox="0 0 6 9"><path d="M1 1L4.5 4.5L1 8" fill="none" stroke="#3C5896" stroke-width="2.4"/></svg></div>
<div class="a" style="left:1004px;top:699px;width:16px;height:17px;background:#F4F3EE"></div>
<svg class="a" style="left:2px;top:726px" width="6" height="8" viewBox="0 0 6 8" shape-rendering="crispEdges"><rect x="0" y="0" width="6" height="8" fill="#000"/><rect x="1" y="1" width="1" height="6" fill="#fff"/><rect x="4" y="1" width="1" height="6" fill="#fff"/></svg>
<div class="a" style="left:984px;top:722px;width:11px;height:15px;border-left:1px solid #ACA899;border-top:1px solid #ACA899;border-right:1px solid #fff;border-bottom:1px solid #fff"></div>
<div class="a" style="left:998px;top:722px;width:11px;height:15px;border-left:1px solid #ACA899;border-top:1px solid #ACA899;border-right:1px solid #fff;border-bottom:1px solid #fff"></div>
<svg class="a" style="left:1000px;top:726px" width="6" height="8" viewBox="0 0 6 8" shape-rendering="crispEdges"><rect x="0" y="0" width="6" height="8" fill="#000"/><rect x="1" y="1" width="1" height="6" fill="#fff"/><rect x="4" y="1" width="1" height="6" fill="#fff"/></svg>
<div class="a" style="left:0;top:737px;width:1024px;height:1px;background:#F4F3EE"></div>
<div id="task" class="a"></div>
<div id="start" class="a"></div>
<svg class="a" style="left:10px;top:744px" width="19" height="17" viewBox="0 0 19 17"><path d="M2 2q3-2 7 0l-1 6q-4-2-7 0z" fill="#F05A22"/><path d="M10 2q3 2 7 0l-1 6q-3 2-7 0z" fill="#7DC143"/><path d="M1 9q3-2 7 0l-1 6q-4-2-7 0z" fill="#4D8FE8"/><path d="M9 9q3 2 7 0l-1 6q-3 2-7 0z" fill="#F9C715"/></svg>
<div class="t" style="left:34px;top:744px;font-size:18px;line-height:18px;font-weight:bold;font-style:italic;color:#fff;text-shadow:1px 1px 1px #1A4A1A">start</div>
<svg class="a" style="left:110px;top:745px" width="15" height="15" viewBox="0 0 16 16"><circle cx="8" cy="8" r="7.5" fill="#DB4437"/><path d="M8 8L1.5 4.5A7.5 7.5 0 0 0 8 15.5z" fill="#0F9D58"/><path d="M8 8L8 15.5A7.5 7.5 0 0 0 14.5 4.5z" fill="#F4B400"/><circle cx="8" cy="8" r="3.5" fill="#fff"/><circle cx="8" cy="8" r="2.6" fill="#4285F4"/></svg>
<svg class="a" style="left:131px;top:743px" width="18" height="18" viewBox="0 0 18 18"><circle cx="9.5" cy="9.5" r="5.8" fill="#2A8AE2"/><ellipse cx="9.7" cy="8" rx="3.2" ry="2.3" fill="#EAF6FF"/><rect x="6" y="8.6" width="7.6" height="1.6" fill="#2A8AE2"/><path d="M12 11.5h4v2h-4z" fill="#2455D8"/><path d="M2.5 16Q0 12.5 6 7.5Q12.5 2 16.5 2.5Q17.5 4 14 7" fill="none" stroke="#F0C848" stroke-width="1.3"/></svg>
<svg class="a" style="left:155px;top:744px" width="16" height="16" viewBox="0 0 16 16"><circle cx="8" cy="8" r="7.5" fill="#2F4FA8"/><circle cx="9" cy="6.5" r="4.5" fill="#4A86D0"/><path d="M1.5 5Q0 10 3.5 13.5Q7 16.5 11.5 15Q15.5 13 15.5 8.5Q14 12 10 12Q6 12 4.5 8.5Q3.5 6 5 3.5Q2.5 3.5 1.5 5z" fill="#E8621C"/><path d="M5 3.5Q3.5 6 4.5 8.5Q5 6 7 5z" fill="#F5A623"/></svg>
<svg class="a" style="left:181px;top:744px" width="10" height="7" viewBox="0 0 10 7"><path d="M1 1l3 2.5l-3 2.5M5 1l3 2.5l-3 2.5" fill="none" stroke="#D8E6FF" stroke-width="1.3"/></svg>
<div class="task" style="left:199px;width:157px"><svg class="a" style="left:9px;top:3px" width="15" height="16" viewBox="0 0 15 16"><path d="M7.5 0L13 14H2z" fill="#F08A10"/><path d="M5 6h5l0.8 2H4.2zM3.6 10h7.8l0.8 2H2.8z" fill="#fff"/><rect x="0.5" y="13.5" width="14" height="2.5" fill="#E07010"/></svg><div class="t" style="left:28px">Abdulbasit Abdulsam...</div></div>
<div class="task" style="left:358px;width:158px"><svg class="a" style="left:9px;top:3px" width="16" height="14" viewBox="0 0 16 14"><rect x="7" y="5" width="2" height="9" fill="#8AD08A"/><circle cx="8" cy="5" r="2" fill="#5ABF5A"/><path d="M4 2q-2 3 0 6M12 2q2 3 0 6M2 0q-3 5 0 10M14 0q3 5 0 10" fill="none" stroke="#5ABF5A" stroke-width="1.2"/></svg><div class="t" style="left:29px">Wireless Network Co...</div></div>
<div class="task act" style="left:519px;width:158px"><svg class="a" style="left:9px;top:3px" width="16" height="16" viewBox="0 0 16 16" shape-rendering="crispEdges"><rect x="0" y="0" width="16" height="16" fill="#EAF6FF"/><rect x="1.5" y="1.5" width="12" height="14" fill="#fff" stroke="#3A3A3A"/><rect x="3" y="4" width="2" height="2" fill="#7A7A7A"/><rect x="3" y="7" width="2" height="2" fill="#7A7A7A"/><rect x="3" y="10" width="2" height="2" fill="#7A7A7A"/><rect x="6" y="4" width="6" height="2" fill="#7A7A7A"/><rect x="6" y="7" width="10" height="9" fill="#10102A"/><rect x="7" y="8" width="3" height="3" fill="#2A58C8"/><rect x="7" y="8" width="3" height="1" fill="#CDE6FF"/><rect x="7" y="8" width="1" height="3" fill="#CDE6FF"/><rect x="11" y="8" width="3" height="3" fill="#D87A20"/><rect x="11" y="8" width="3" height="1" fill="#FFDDA8"/><rect x="11" y="8" width="1" height="3" fill="#FFDDA8"/><rect x="7" y="12" width="3" height="3" fill="#30A050"/><rect x="11" y="12" width="3" height="3" fill="#B040B8"/></svg><div class="t" style="left:29px">AliEditor - D:\<span dir="rtl" style="unicode-bidi:isolate">الريسيف</span>...</div></div>
<div id="tray" class="a"></div>
<div class="t" style="left:862px;top:747px;color:#fff">EN</div>
<div class="a" style="left:889px;top:745px;width:17px;height:17px;border-radius:50%;background:radial-gradient(circle at 40% 35%,#7FB4FF 0,#3D7FE8 60%,#2A5FC8 100%);border:1px solid #A8C8FF"><svg class="a" style="left:4px;top:3px" width="8" height="10" viewBox="0 0 8 10"><path d="M6 1L2 5L6 9" fill="none" stroke="#fff" stroke-width="2"/></svg></div>
<svg class="a" style="left:908px;top:744px" width="17" height="17" viewBox="0 0 17 17"><rect x="1" y="4" width="7" height="8" fill="#C8D8F0" stroke="#5A78A8" stroke-width="0.8"/><rect x="2" y="12" width="5" height="3" fill="#D8E4F4"/><path d="M10 3q2 2 0 4M12 1q3 3 0 7M14 0q4 4 0 9" fill="none" stroke="#fff" stroke-width="1"/></svg>
<div class="a" style="left:926px;top:745px;width:16px;height:15px;background:#fff"><div class="a" style="left:3px;top:10px;width:2px;height:3px;background:#E0A030"></div><div class="a" style="left:6px;top:7px;width:2px;height:6px;background:#E0A030"></div><div class="a" style="left:9px;top:4px;width:2px;height:9px;background:#E0A030"></div><div class="a" style="left:12px;top:1px;width:2px;height:12px;background:#E0A030"></div></div>
<svg class="a" style="left:945px;top:745px" width="14" height="15" viewBox="0 0 15 16"><path d="M7.5 0L13 14H2z" fill="#F08A10"/><path d="M5 6h5l0.8 2H4.2zM3.6 10h7.8l0.8 2H2.8z" fill="#fff"/><rect x="0.5" y="13.5" width="14" height="2.5" fill="#E07010"/></svg>
<div class="t" style="left:969px;top:747px;color:#fff">07:32 <span dir="rtl">م</span></div>
</body></html>
